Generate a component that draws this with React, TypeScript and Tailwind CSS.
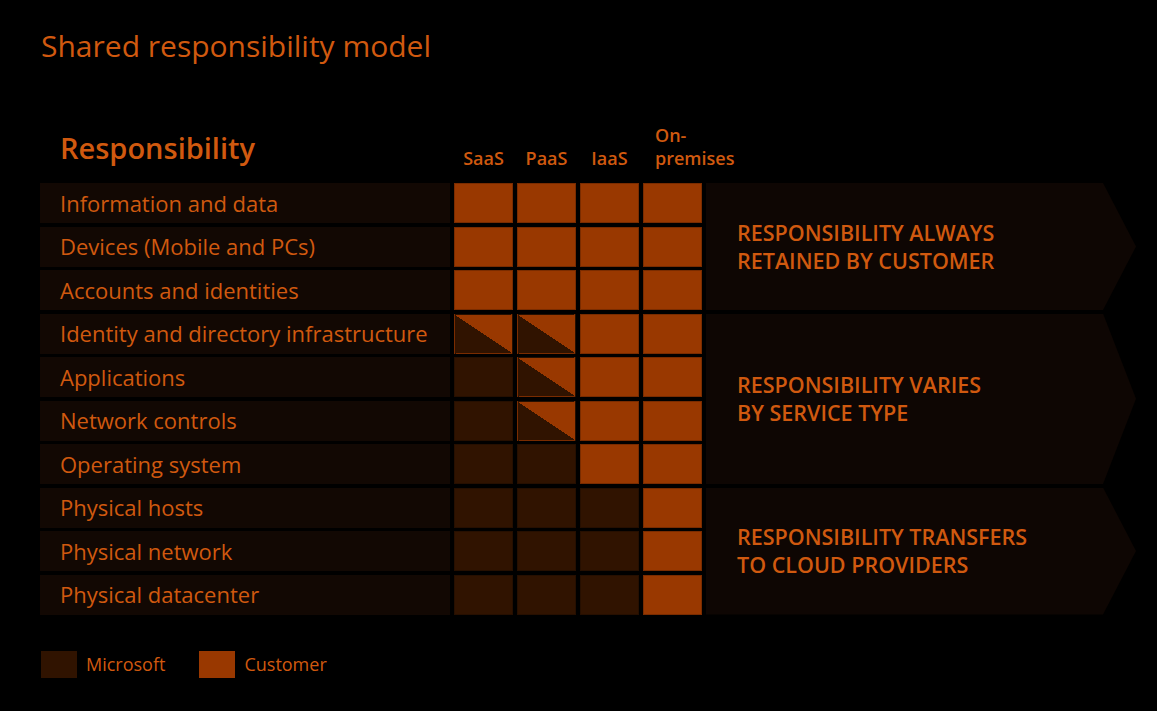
import React from "react";

type Cell = "c" | "m" | "s";

const rows: { label: string; cells: Cell[] }[] = [
  { label: "Information and data", cells: ["c", "c", "c", "c"] },
  { label: "Devices (Mobile and PCs)", cells: ["c", "c", "c", "c"] },
  { label: "Accounts and identities", cells: ["c", "c", "c", "c"] },
  { label: "Identity and directory infrastructure", cells: ["s", "s", "c", "c"] },
  { label: "Applications", cells: ["m", "s", "c", "c"] },
  { label: "Network controls", cells: ["m", "s", "c", "c"] },
  { label: "Operating system", cells: ["m", "m", "c", "c"] },
  { label: "Physical hosts", cells: ["m", "m", "m", "c"] },
  { label: "Physical network", cells: ["m", "m", "m", "c"] },
  { label: "Physical datacenter", cells: ["m", "m", "m", "c"] },
];

const cellClass: Record<Cell, string> = {
  c: "bg-[#993800]",
  m: "bg-[#301300]",
  s: "bg-[linear-gradient(to_top_right,#301300_50%,#993800_50%)]",
};

function Chevron({ place, lines }: { place: string; lines: string[] }) {
  return (
    <div
      className={`${place} flex flex-col justify-center bg-[#0e0603] pl-[31px] [clip-path:polygon(0_0,calc(100%_-_33px)_0,100%_50%,calc(100%_-_33px)_100%,0_100%)]`}
    >
      {lines.map((l) => (
        <div key={l} className="text-[21.5px] leading-[28px] font-semibold text-[#d0590f]">
          {l}
        </div>
      ))}
    </div>
  );
}

export default function App() {
  return (
    <div className="min-h-screen w-full bg-black pl-[40px] pt-[31px] font-['Open_Sans',sans-serif] text-[#d0590f]">
      <h1 className="pl-px text-[30px] leading-none">Shared responsibility model</h1>

      {/* column headings */}
      <div className="mt-[63px] mb-[13px] grid grid-cols-[410px_59px_59px_59px_59px] items-end gap-x-[4px]">
        <div className="pb-[8px] pl-[20px] text-[29px] leading-none font-semibold">Responsibility</div>
        <div className="text-center text-[18px] leading-[23px] font-semibold">SaaS</div>
        <div className="text-center text-[18px] leading-[23px] font-semibold">PaaS</div>
        <div className="text-center text-[18px] leading-[23px] font-semibold">IaaS</div>
        <div className="pl-[12px] text-[18px] leading-[23px] font-semibold whitespace-nowrap">
          On-
          <br />
          premises
        </div>
      </div>

      {/* matrix */}
      <div className="grid grid-cols-[410px_59px_59px_59px_59px_430px] grid-rows-[repeat(10,40px)] gap-x-[4px] gap-y-[3.5px]">
        <Chevron place="col-start-6 row-start-1 row-span-3" lines={["RESPONSIBILITY ALWAYS", "RETAINED BY CUSTOMER"]} />
        <Chevron place="col-start-6 row-start-4 row-span-4" lines={["RESPONSIBILITY VARIES", "BY SERVICE TYPE"]} />
        <Chevron place="col-start-6 row-start-8 row-span-3" lines={["RESPONSIBILITY TRANSFERS", "TO CLOUD PROVIDERS"]} />
        {rows.map((r) => (
          <React.Fragment key={r.label}>
            <div className="flex items-center bg-[#120803] pl-[20px] text-[22px]">{r.label}</div>
            {r.cells.map((c, i) => (
              <div key={i} className={`${cellClass[c]} border border-black/20`} />
            ))}
          </React.Fragment>
        ))}
      </div>

      {/* legend */}
      <div className="mt-[36px] flex items-center text-[18px]">
        <div className="ml-px h-[27px] w-[36px] bg-[#301300]" />
        <span className="ml-[9px]">Microsoft</span>
        <div className="ml-[34px] h-[27px] w-[36px] bg-[#993800]" />
        <span className="ml-[9px]">Customer</span>
      </div>
    </div>
  );
}
